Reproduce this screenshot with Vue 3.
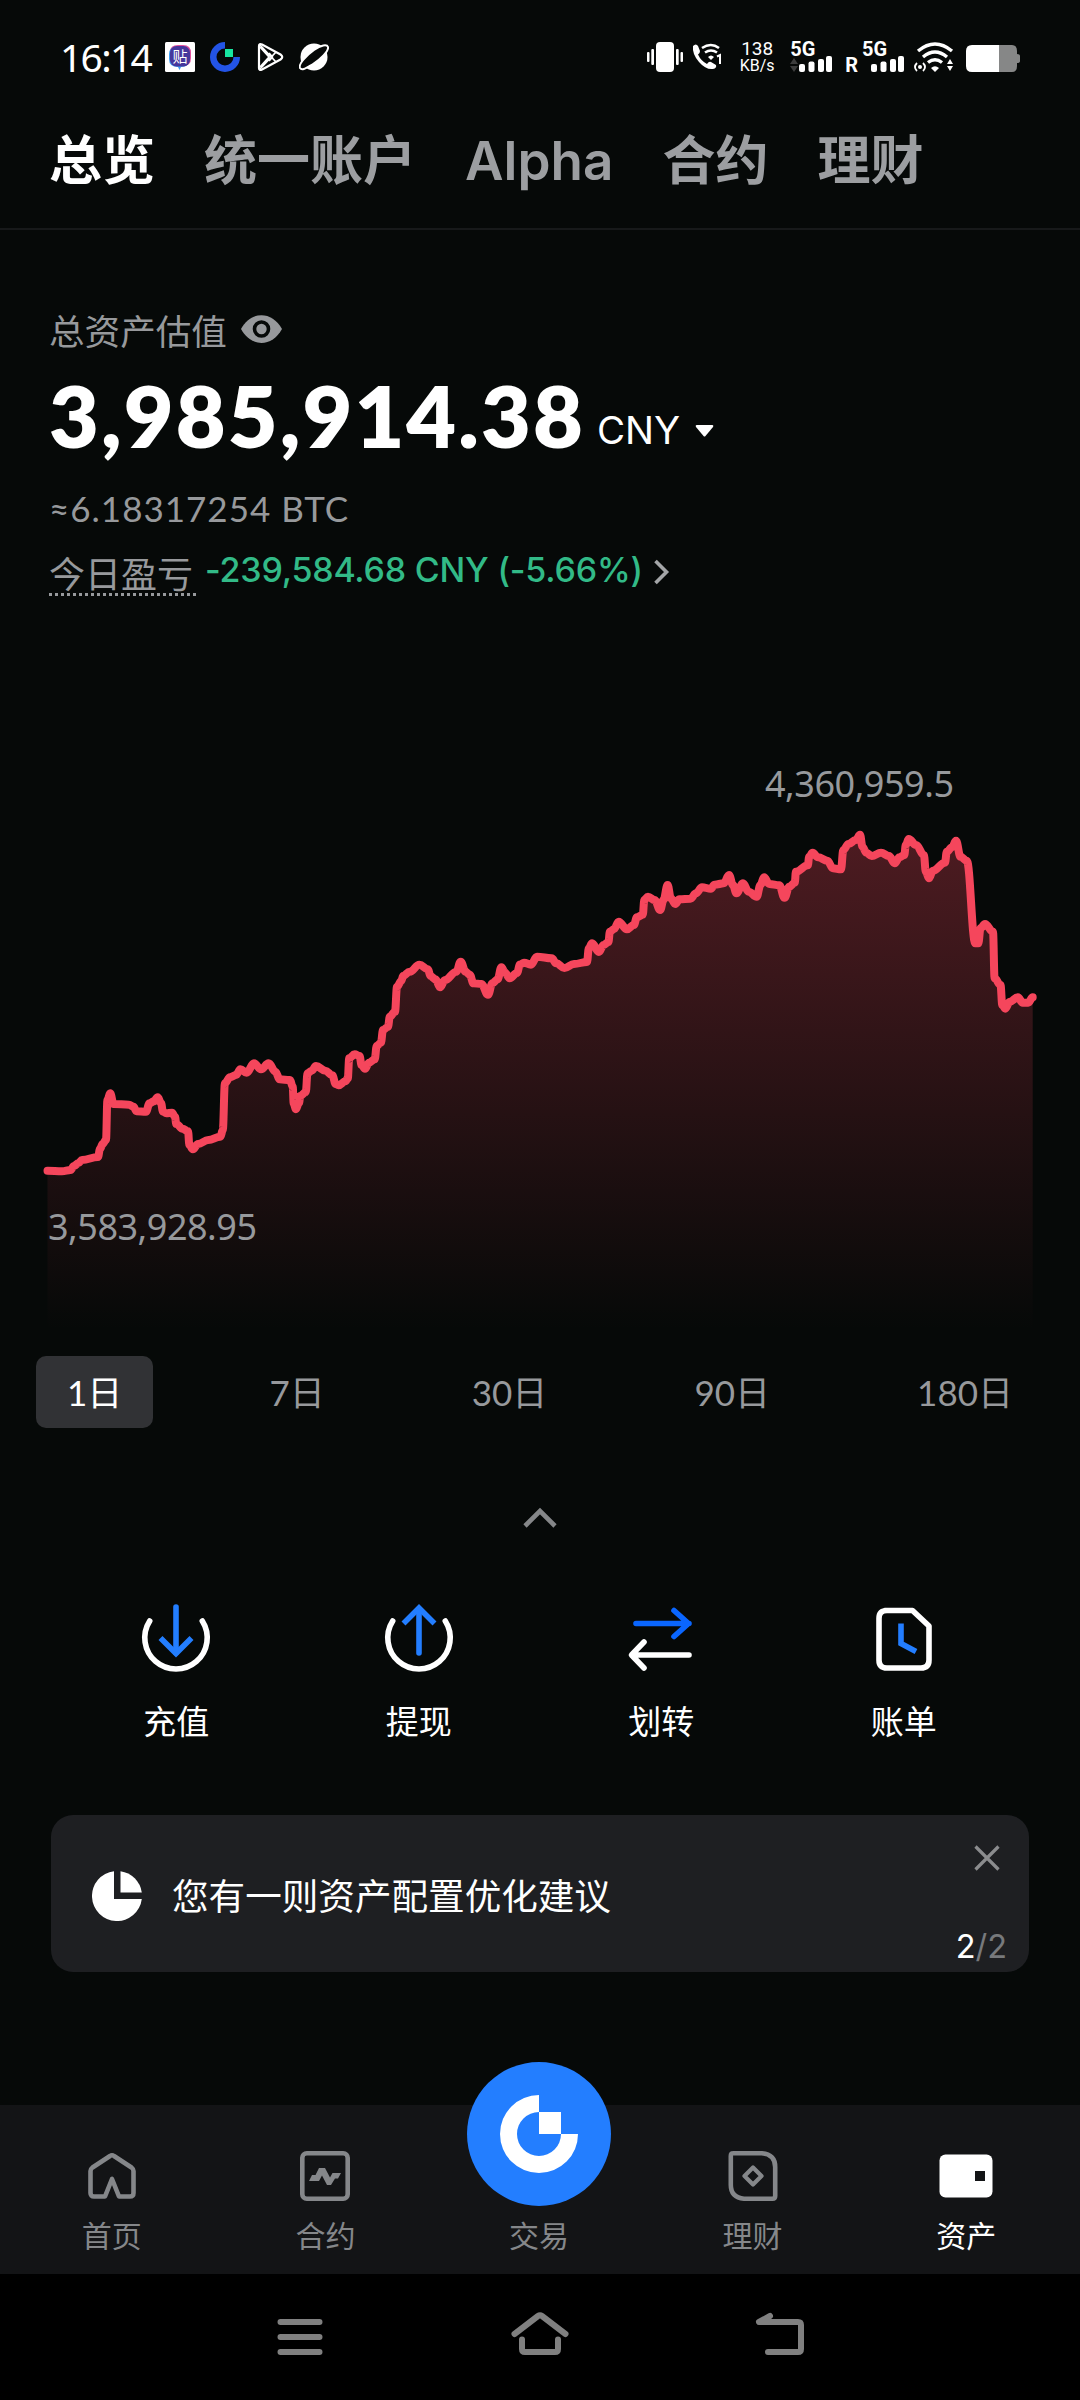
<script setup>
import { ref, computed } from "vue";

const tabs = ["总览", "统一账户", "Alpha", "合约", "理财"];
const activeTab = ref("总览");

const ranges = ["1日", "7日", "30日", "90日", "180日"];
const activeRange = ref("1日");

const navItems = [
  { id: "home", label: "首页" },
  { id: "futures", label: "合约" },
  { id: "trade", label: "交易" },
  { id: "earn", label: "理财" },
  { id: "assets", label: "资产" },
];
const activeNav = ref("assets");

const actions = [
  { id: "deposit", label: "充值" },
  { id: "withdraw", label: "提现" },
  { id: "transfer", label: "划转" },
  { id: "bill", label: "账单" },
];

// asset curve, x/y in chart units
const points = [
  [47.5, 1170.7], [62, 1171.3], [70.6, 1170], [74, 1166], [78.5, 1163], [82, 1160], [98, 1157], [100, 1149],
  [102.6, 1144], [106, 1140], [107.4, 1100], [110.2, 1093.3], [113.6, 1104], [129, 1104.7], [133.6, 1106.7],
  [136.4, 1111.3], [146, 1111.7], [149.5, 1103.3], [153.6, 1101.3], [157.7, 1097.3], [161, 1103], [163, 1111.7],
  [166.3, 1113.3], [172, 1112.7], [175, 1116.7], [176.3, 1124], [182.5, 1128.7], [188, 1131.3], [189.4, 1145],
  [192.8, 1149.3], [198, 1144], [208.3, 1140], [220.4, 1136.7], [222.8, 1130], [224.9, 1083.3], [230, 1077.3],
  [236, 1075], [240.4, 1069.3], [246.6, 1072.7], [254, 1063.3], [261, 1069.3], [268.6, 1063.3], [275.5, 1071.7],
  [279.6, 1079.3], [290, 1080], [292.7, 1086.7], [293.7, 1103.3], [295.8, 1109.3], [299, 1103], [300.3, 1096],
  [305.8, 1092], [307.5, 1073.3], [311.6, 1070.7], [316, 1066], [325.4, 1070.7], [332.3, 1075.3], [335.7, 1084],
  [338.5, 1085.3], [345.4, 1081.3], [347.8, 1078.3], [349.2, 1058.3], [354.7, 1054.3], [359.5, 1056],
  [361.6, 1065], [365, 1068.7], [369, 1062.7], [374.7, 1059.3], [376.7, 1046], [380.9, 1042.7], [383, 1030],
  [388, 1026.7], [389.8, 1016.7], [395, 1011.7], [397, 986.7], [401.5, 980.7], [403, 976], [409.8, 971.7],
  [419.4, 964.7], [428, 969.3], [430.4, 976], [435.6, 979.3], [440, 987.3], [445, 980], [456.3, 971.7],
  [460.7, 961.7], [465.6, 971.7], [469.7, 974.7], [473.5, 983.3], [481.4, 984], [488, 994.7], [492.4, 983.3],
  [497.6, 979.3], [501.4, 967.3], [505.2, 972.7], [509.6, 978.3], [517, 973], [520, 964.5], [524, 962.7],
  [531, 964.7], [537, 956.7], [551.8, 958.3], [556.2, 963.3], [564.4, 968], [574, 964], [587, 962],
  [588.8, 948.3], [592.1, 943.3], [598.8, 952], [603.6, 945], [608.4, 942], [609.9, 931.7], [614, 929],
  [618.7, 921.7], [626.9, 929.3], [633.9, 925], [636.9, 917.3], [642.8, 914.7], [644.3, 900], [648, 896.7],
  [654.6, 900], [660.2, 910], [663.5, 900], [667.6, 885], [670.9, 898.3], [675.3, 904], [679.4, 899.3],
  [690.5, 898.7], [696, 893.3], [702, 887.3], [710.8, 888.7], [714.5, 884.7], [723.8, 883.3], [729, 875],
  [733, 885], [736.4, 893.3], [743, 883.3], [748.6, 891.7], [756.7, 896.7], [760.4, 885], [764.1, 877.3],
  [769.3, 884], [779.3, 885.3], [784.5, 897.7], [789.3, 886.7], [794.8, 882.7], [795.9, 871.7], [807.8, 865.3],
  [809.2, 856.7], [812.6, 852.7], [818, 857.3], [827.4, 860.7], [832.9, 868.3], [841, 869.3], [843.3, 850],
  [848.5, 844], [855.8, 840], [860, 834.7], [862.5, 846.7], [866.2, 852.7], [871.8, 856], [881, 852.7],
  [889, 856], [894.7, 863.3], [899.5, 857.3], [904.3, 855], [905.8, 845], [908.7, 839], [916.1, 845],
  [923.9, 855], [925.8, 871.7], [929.1, 878.3], [932.8, 870.7], [945, 862.7], [946.8, 851.7], [952, 847.3],
  [956, 840.7], [960.5, 856.7], [966.8, 860.7], [975.3, 943.3], [978.3, 943.3], [980.5, 928.3], [985, 924],
  [993, 931.7], [994.6, 978.3], [1000.5, 985], [1002.3, 1005], [1005.3, 1008.7], [1009.7, 1001.7],
  [1017.9, 997.3], [1022.7, 1002.7], [1028.2, 1002.7], [1032.7, 997.3],
];

// each segment eases in and out horizontally, so the peaks come out rounded
const linePath = computed(() => {
  let d = `M${points[0].join(" ")}`;
  for (let i = 1; i < points.length; i++) {
    const [x0, y0] = points[i - 1];
    const [x1, y1] = points[i];
    const dx = (x1 - x0) * 0.4;
    d += `C${x0 + dx} ${y0} ${x1 - dx} ${y1} ${x1} ${y1}`;
  }
  return d;
});
const areaPath = computed(() => `${linePath.value}V1330H47.5Z`);
</script>

<template>
  <div class="page">
    <header class="status">
      <div class="status-left">
        <span class="time">16:14</span>
        <svg class="app-icon tieba" width="30" height="30" viewBox="0 0 30 30">
          <rect width="30" height="30" rx="1.500" fill="#fff" />
          <path d="M5 10Q5 3 13 3H18Q26 3 26 11V16Q26 24 18 24H13Q5 24 5 16Z" fill="#e0509c" />
          <path d="M4 12Q4 5 12 4.500H16Q24 4.500 24.500 12V17Q24 25 16 25L14.500 28L13 25Q4 25 4 17Z" fill="#3d9df2" />
          <rect x="5" y="4" width="20" height="20.500" rx="6.500" fill="#46379c" />
          <text x="15" y="20" text-anchor="middle" class="tieba-text">贴</text>
        </svg>
        <svg class="app-icon" width="30" height="30" viewBox="0 0 30 30">
          <path d="M15 0A15 15 0 1 0 30 15H23.500A8.500 8.500 0 1 1 15 6.500Z" fill="#2354e6" />
          <rect x="15" y="7" width="8" height="8" fill="#17e6a1" />
        </svg>
        <svg class="app-icon play" width="27" height="30" viewBox="0 0 27 30" fill="none" stroke="#fff" stroke-width="2.200" stroke-linejoin="round">
          <path d="M2 4Q2 1 5 2.500L23.500 12.500Q27 15 23.500 17.500L5 27.500Q2 29 2 26Z" />
          <path d="M3 3L19 20M3 27L19 10M12 11L15.500 15L12 19M3 5L12 15L3 25" stroke-width="1.800" />
        </svg>
        <svg class="app-icon planet" width="30" height="30" viewBox="0 0 30 30">
          <circle cx="15" cy="15" r="13.500" fill="#fff" />
          <path d="M1 26C-1 22 8 13 15 8S28 2 29 5C30 9 21 18 14 22S3 29 1 26Z" fill="#060908" stroke="#fff" stroke-width="2" />
        </svg>
      </div>

      <div class="status-right">
        <svg width="36" height="30" viewBox="0 0 36 30" fill="#fff">
          <rect x="9" y="0" width="18" height="30" rx="4" />
          <rect x="0" y="10" width="2.500" height="10" rx="1" />
          <rect x="4.300" y="7" width="2.700" height="16" rx="1" />
          <rect x="29" y="7" width="2.700" height="16" rx="1" />
          <rect x="33.500" y="10" width="2.500" height="10" rx="1" />
        </svg>
        <svg class="call" width="30" height="30" viewBox="0 0 30 30" fill="none" stroke="#fff">
          <path d="M1 4Q4 1 6 4L8 9Q8 11 6 12.500Q9 19 15 22Q17 19 19 20L24 23Q25 26 21 27Q14 28 7 20Q0 12 1 4Z" fill="#fff" stroke="none" />
          <path d="M10 6Q19 0 27 6M13 10.500Q19 6.500 25 10.500" stroke-width="2.600" />
          <path d="M16 15Q19 12 22 15L19 18Z" fill="#fff" stroke="none" />
          <path d="M25 14.500L28 13V22" stroke-width="2" />
        </svg>
        <div class="speed">
          <span>138</span>
          <span>KB/s</span>
        </div>
        <div class="signal">
          <span class="net">5G</span>
          <svg width="36" height="18" viewBox="0 0 36 18" fill="#fff">
            <path d="M0 9L4 3L8 9ZM0 11L4 17L8 11Z" fill="#3c3d3d" />
            <rect x="9" y="9" width="6" height="8" rx="2" />
            <rect x="18.500" y="6.500" width="6" height="10.500" rx="2" />
            <rect x="28" y="4" width="6" height="13" rx="2" />
          </svg>
          <i class="bar"></i>
        </div>
        <span class="roaming">R</span>
        <div class="signal second">
          <span class="net">5G</span>
          <svg width="36" height="18" viewBox="0 0 36 18" fill="#fff">
            <rect x="9" y="9" width="6" height="8" rx="2" />
            <rect x="18.500" y="6.500" width="6" height="10.500" rx="2" />
            <rect x="28" y="4" width="6" height="13" rx="2" />
          </svg>
          <i class="bar"></i>
        </div>
        <svg class="wifi" width="40" height="30" viewBox="0 0 40 30" fill="none" stroke="#fff">
          <path d="M4 9Q21 -5 38 9M9 15Q21 5 33 15M14 20.500Q21 15 28 20.500" stroke-width="3.400" />
          <path d="M17 26Q21 22.500 25 26L21 30Z" fill="#fff" stroke="none" />
          <path d="M3 21Q-1 25 3 29M9 21Q13 25 9 29" stroke-width="1.800" />
          <circle cx="6" cy="25" r="2" fill="#fff" stroke="none" />
          <path d="M33 22L36 17L39 22ZM33 24L36 29L39 24Z" fill="#fff" stroke="none" />
        </svg>
        <svg class="battery" width="54" height="28" viewBox="0 0 54 28">
          <path d="M32 0H46Q51 0 51 6V9Q54 9 54 11V16Q54 18 51 18V21Q51 27 46 27H32Z" fill="#868787" />
          <path d="M33 0H6Q0 0 0 6V21Q0 27 6 27H33Z" fill="#fff" />
        </svg>
      </div>
    </header>

    <nav class="tabs">
      <span
        v-for="tab in tabs"
        :key="tab"
        class="tab"
        :class="{ active: tab === activeTab }"
        @click="activeTab = tab"
      >{{ tab }}</span>
    </nav>

    <section class="summary">
      <div class="label-row">
        <span>总资产估值</span>
        <svg width="41" height="28" viewBox="0 0 41 28">
          <path d="M0 14C10 -4.500 31 -4.500 41 14C31 32.500 10 32.500 0 14Z" fill="#97999c" />
          <circle cx="20.500" cy="14" r="7" fill="#97999c" stroke="#060908" stroke-width="3.600" />
        </svg>
      </div>
      <div class="amount-row">
        <span class="amount">3,985,914.38</span>
        <span class="currency">CNY</span>
        <svg class="caret" width="19" height="12" viewBox="0 0 19 12">
          <path d="M1.500 0H17.500Q19 0.500 18 2L10.500 11Q9.500 12 8.500 11L1 2Q0 0.500 1.500 0Z" fill="#fff" />
        </svg>
      </div>
      <div class="btc">≈6.18317254 BTC</div>
      <div class="pnl-row">
        <span class="pnl-label">今日盈亏</span>
        <span class="pnl">-239,584.68 CNY (-5.66%)</span>
        <svg width="17" height="26" viewBox="0 0 17 26" fill="none" stroke="#a4a6a8" stroke-width="3.600">
          <path d="M2.500 2L13.500 13L2.500 24" />
        </svg>
      </div>
    </section>

    <svg class="chart" width="1080" height="720" viewBox="0 620 1080 720">
      <defs>
        <linearGradient id="area" gradientUnits="userSpaceOnUse" x1="0" y1="832" x2="0" y2="1330">
          <stop offset="0" stop-color="#f5465c" stop-opacity="0.3" />
          <stop offset="1" stop-color="#f5465c" stop-opacity="0" />
        </linearGradient>
      </defs>
      <path :d="areaPath" fill="url(#area)" />
      <path :d="linePath" fill="none" stroke="#f5465c" stroke-width="8" stroke-linecap="round" stroke-linejoin="round" />
      <text x="765" y="797" textLength="189" class="chart-label">4,360,959.5</text>
      <text x="48" y="1240" textLength="209" class="chart-label">3,583,928.95</text>
    </svg>

    <div class="ranges">
      <span
        v-for="range in ranges"
        :key="range"
        class="range"
        :class="{ active: range === activeRange }"
        @click="activeRange = range"
      >{{ range }}</span>
    </div>

    <div class="collapse">
      <svg width="34" height="22" viewBox="0 0 34 22" fill="none" stroke="#858789" stroke-width="4.600">
        <path d="M2 19L17 4L32 19" />
      </svg>
    </div>

    <div class="actions">
      <div v-for="action in actions" :key="action.id" class="action">
        <svg width="72" height="72" viewBox="0 0 72 72" fill="none" stroke="#fff" stroke-width="5.600" stroke-linecap="round">
          <template v-if="action.id === 'deposit'">
            <path d="M9.700 18A31.200 31.200 0 1 0 62.300 18" />
            <path d="M36 4V50" stroke="#237eff" />
            <path d="M20.500 35L36 50.500L51.500 35" stroke="#237eff" stroke-linecap="butt" />
          </template>
          <template v-else-if="action.id === 'withdraw'">
            <path d="M9.700 18A31.200 31.200 0 1 0 62.300 18" />
            <path d="M36 6V50" stroke="#237eff" />
            <path d="M20.500 20.500L36 5L51.500 20.500" stroke="#237eff" stroke-linecap="butt" />
          </template>
          <template v-else-if="action.id === 'transfer'">
            <path d="M11 20.500H64M49 7.500L63.500 20.500L49 33.500" stroke="#0a66ff" stroke-linejoin="round" />
            <path d="M64 52H8M19 39L6.500 52L19 65" stroke-linejoin="round" />
          </template>
          <template v-else>
            <path d="M17 7.500H44.500L61 23V57Q61 65 53 65H19Q11 65 11 57V15.500Q11 7.500 19 7.500" stroke-linejoin="round" />
            <path d="M33 20.500V40.500L48 48.500" stroke="#237eff" stroke-linecap="butt" />
          </template>
        </svg>
        <span>{{ action.label }}</span>
      </div>
    </div>

    <div class="tip">
      <svg class="pie" width="50" height="50" viewBox="0 0 50 50" fill="#fff">
        <path d="M22 0.200A25 25 0 1 0 49.800 28H22Z" />
        <path d="M28.500 0.200A25 25 0 0 1 49.800 21.500H28.500Z" />
      </svg>
      <span class="tip-text">您有一则资产配置优化建议</span>
      <div class="tip-side">
        <svg width="26" height="26" viewBox="0 0 26 26" stroke="#8b8c8e" stroke-width="3.200">
          <path d="M1.500 1.500L24.500 24.500M24.500 1.500L1.500 24.500" />
        </svg>
        <span class="pager"><b>2</b>/2</span>
      </div>
    </div>

    <footer class="bottom-nav">
      <div
        v-for="item in navItems"
        :key="item.id"
        class="nav-item"
        :class="{ active: item.id === activeNav }"
      >
        <div v-if="item.id === 'trade'" class="fab">
          <svg width="78" height="78" viewBox="0 0 78 78" fill="#fff">
            <path d="M39 0A39 39 0 1 0 78 39H61A22 22 0 1 1 39 17Z" />
            <rect x="39" y="17" width="22" height="22" />
          </svg>
        </div>
        <svg v-else class="nav-icon" width="54" height="50" viewBox="0 0 54 50" fill="none" stroke="currentColor" stroke-width="4.600">
          <path v-if="item.id === 'home'" d="M20 45.500H9Q5.500 45.500 5.500 42V20Q5.500 18 7.500 16.500L25 5Q27 3.500 29 5L46.500 16.500Q48.500 18 48.500 20V42Q48.500 45.500 45 45.500H34L27 28L20 45.500Z" stroke-linejoin="round" />
          <template v-else-if="item.id === 'futures'">
            <rect x="4.300" y="2.300" width="45.400" height="45.400" rx="4.500" />
            <path d="M11 30L14 24H17.500L21 17H27L32 26.500L34.500 22H43L40 27.500H37L33 34H29L24 24.500L21 30Z" fill="currentColor" stroke="none" />
          </template>
          <template v-else-if="item.id === 'earn'">
            <path d="M6.500 2.300H36Q49.200 3.500 49.200 16V45Q49.200 47.700 46.500 47.700H18Q4.800 46.500 4.800 34V5Q4.800 2.300 7 2.300" />
            <path d="M27 16.500L35.500 25L27 33.500L18.500 25Z" stroke-linejoin="round" stroke-width="4.200" />
          </template>
          <template v-else>
            <rect x="0.500" y="3.500" width="53" height="43" rx="6" fill="#fff" stroke="none" />
            <rect x="36" y="20" width="10" height="10" fill="#131416" stroke="none" />
          </template>
        </svg>
        <span>{{ item.label }}</span>
      </div>
    </footer>

    <div class="system-nav">
      <svg width="60" height="50" viewBox="0 0 60 50" class="sys-icon">
        <path d="M10.500 11H49.500M10.500 26H49.500M10.500 41H49.500" />
      </svg>
      <svg width="60" height="50" viewBox="0 0 60 50" class="sys-icon">
        <path d="M4.500 23L28 5Q30 3.500 32 5L55.500 23M12 28.500V38Q12 41 15 41H45Q48 41 48 38V28.500" />
      </svg>
      <svg width="60" height="50" viewBox="0 0 60 50" class="sys-icon">
        <path d="M20 5L9 11H48Q51 11 51 14V38Q51 41 48 41H18" />
      </svg>
    </div>
  </div>
</template>

<style>
body {
  background: #060908;
}
</style>

<style scoped>
.page {
  width: 1080px;
  height: 2400px;
  display: flex;
  flex-direction: column;
  overflow: hidden;
  background: #060908;
  color: #fff;
  font-family: Inter, "Noto Sans CJK SC", sans-serif;
}
.page > * {
  flex-shrink: 0;
  box-sizing: border-box;
}
.status {
  height: 114px;
  padding: 0 60px;
  display: flex;
  justify-content: space-between;
  align-items: center;
}
.status-left,
.status-right {
  display: flex;
  align-items: center;
}
.time {
  width: 105px;
  font-family: "Noto Sans", sans-serif;
  font-size: 39px;
  line-height: 40px;
  letter-spacing: -1.7px;
}
.app-icon {
  margin-right: 15px;
}
.play {
  margin-left: 2px;
}
.tieba-text {
  fill: #fff;
  font-family: "Noto Sans CJK SC", sans-serif;
  font-size: 15px;
}
.call {
  margin-left: 9px;
}
.speed {
  width: 36px;
  margin-left: 17px;
  display: flex;
  flex-direction: column;
  align-items: center;
  font-family: Roboto, sans-serif;
  font-size: 19px;
  line-height: 17px;
}
.speed span:last-child {
  font-size: 16px;
}
.signal {
  width: 44px;
  height: 32px;
  margin-left: 15px;
  display: grid;
  grid-template-columns: 36px 8px;
  grid-template-rows: 14px 18px;
}
.signal.second {
  margin-left: 2px;
  margin-right: 1px;
}
.signal .net {
  grid-column: 1 / 3;
}
.signal.second .net {
  margin-left: 2px;
}
.signal.second svg,
.signal.second .bar {
  margin-left: 2px;
}
.bar {
  width: 6px;
  height: 16px;
  margin-top: 1px;
  border-radius: 2px;
  background: #fff;
}
.net,
.roaming {
  font-family: Roboto, sans-serif;
  font-size: 20px;
  font-weight: 700;
  line-height: 16px;
}
.roaming {
  margin: 15px 0 0 11px;
}
.wifi {
  margin-left: 9px;
}
.battery {
  margin: 4px 0 0 12px;
}
.tabs {
  height: 116px;
  padding: 21px 49px 0;
  display: flex;
  gap: 49px;
  border-bottom: 2px solid #17191a;
}
.tab {
  color: #9c9ea1;
  font-size: 53px;
  font-weight: 600;
  line-height: 52px;
}
.tab.active {
  color: #fff;
}
.summary {
  height: 390px;
  padding: 77px 49px 0;
}
.label-row {
  height: 44px;
  display: flex;
  align-items: center;
  gap: 14px;
  color: #97999c;
  font-size: 35.6px;
}
.amount-row {
  height: 84px;
  margin-top: 22px;
  display: flex;
  align-items: baseline;
  line-height: 84px;
}
.amount {
  font-family: Lato, sans-serif;
  font-size: 86px;
  font-weight: 800;
  letter-spacing: 2.1px;
}
.currency {
  position: relative;
  top: -4px;
  margin-left: 12px;
  font-size: 38.5px;
}
.caret {
  margin: 0 0 8px 15px;
  position: relative;
  top: -11px;
}
.btc {
  height: 40px;
  margin-top: 31px;
  color: #97999c;
  font-family: Lato, sans-serif;
  font-size: 35px;
  line-height: 40px;
  letter-spacing: 1px;
}
.pnl-row {
  height: 50px;
  margin-top: 19px;
  display: flex;
  align-items: flex-start;
}
.pnl-label {
  width: 147px;
  height: 49px;
  box-sizing: border-box;
  border-bottom: 3px dotted #97999c;
  color: #97999c;
  font-size: 36px;
  line-height: 56px;
}
.pnl {
  margin-left: 9px;
  color: #32ba87;
  font-size: 34px;
  font-weight: 500;
  line-height: 46px;
  letter-spacing: -0.2px;
}
.pnl-row svg {
  margin: 12px 0 0 10px;
}
.chart {
  display: block;
}
.chart-label {
  fill: #97999c;
  font-family: "Noto Sans", sans-serif;
  font-size: 36px;
}
.ranges {
  height: 72px;
  margin-top: 16px;
  padding: 0 36px;
  display: flex;
  justify-content: space-between;
}
.range {
  padding: 0 31px;
  border-radius: 10px;
  color: #97999c;
  font-family: Lato, "Noto Sans CJK SC", sans-serif;
  font-size: 35px;
  line-height: 72px;
}
.range.active {
  background: #313235;
  color: #fff;
}
.collapse {
  height: 175px;
  padding-top: 79px;
  display: flex;
  justify-content: center;
  box-sizing: border-box;
}
.actions {
  height: 212px;
  padding: 0 55px;
  display: grid;
  grid-template-columns: repeat(4, 1fr);
}
.action {
  display: flex;
  flex-direction: column;
  align-items: center;
  gap: 23px;
  font-size: 33px;
  line-height: 48px;
}
.tip {
  height: 157px;
  margin: 0 51px;
  padding: 0 22px 0 41px;
  display: flex;
  align-items: center;
  border-radius: 22px;
  background: #1e1f22;
}
.pie {
  margin-top: 4px;
}
.tip-text {
  margin: 2px auto 0 30px;
  font-size: 36.6px;
}
.tip-side {
  height: 157px;
  padding: 30px 0 8px;
  box-sizing: border-box;
  display: flex;
  flex-direction: column;
  align-items: flex-end;
  justify-content: space-between;
}
.tip-side svg {
  margin-right: 7px;
}
.pager {
  color: #77797c;
  font-size: 32.5px;
  line-height: 34px;
}
.pager b {
  color: #fff;
  font-weight: 400;
}
.bottom-nav {
  height: 169px;
  margin-top: 133px;
  padding: 0 7px 0 5px;
  display: grid;
  grid-template-columns: repeat(5, 1fr);
  background: #131416;
}
.nav-item {
  position: relative;
  display: flex;
  flex-direction: column;
  align-items: center;
  justify-content: flex-end;
  padding-bottom: 18px;
  color: #85878a;
  font-size: 30px;
  line-height: 40px;
}
.nav-item.active {
  color: #fff;
}
.nav-icon {
  margin-bottom: 15px;
}
/* round trade button sticks out above the bar */
.fab {
  position: absolute;
  top: -43px;
  width: 144px;
  height: 144px;
  display: flex;
  align-items: center;
  justify-content: center;
  border-radius: 50%;
  background: #237eff;
}
.system-nav {
  height: 126px;
  padding: 0 270px;
  display: flex;
  justify-content: space-between;
  background: #000;
}
.sys-icon {
  margin-top: 37px;
  fill: none;
  stroke: #808080;
  stroke-width: 6;
  stroke-linecap: round;
  stroke-linejoin: round;
}
</style>
